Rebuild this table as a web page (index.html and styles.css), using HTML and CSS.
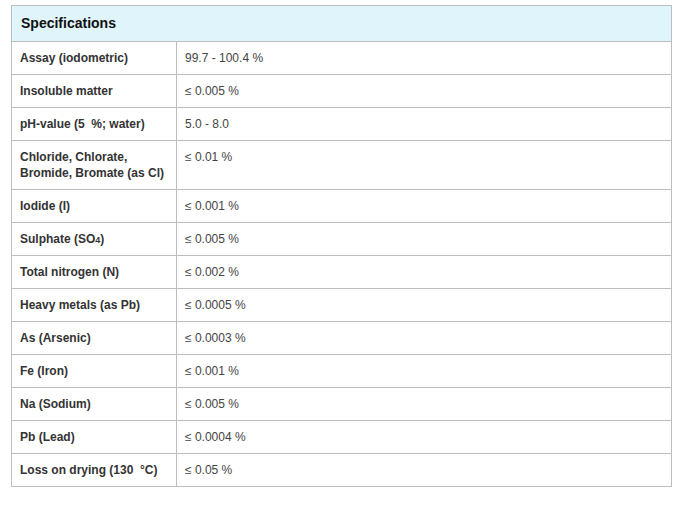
FILE: index.html
```
<!DOCTYPE html>
<html>
<head>
<meta charset="utf-8">
<link rel="stylesheet" href="styles.css">
</head>
<body>
<table class="spec">
  <colgroup>
    <col class="col-k">
    <col class="col-v">
  </colgroup>
  <thead>
    <tr><th colspan="2">Specifications</th></tr>
  </thead>
  <tbody>
    <tr><td class="k">Assay (iodometric)</td><td class="v">99.7 - 100.4 %</td></tr>
    <tr><td class="k">Insoluble matter</td><td class="v">≤ 0.005 %</td></tr>
    <tr><td class="k">pH-value (5 &nbsp;%; water)</td><td class="v">5.0 - 8.0</td></tr>
    <tr><td class="k">Chloride, Chlorate,<br>Bromide, Bromate (as Cl)</td><td class="v">≤ 0.01 %</td></tr>
    <tr><td class="k">Iodide (I)</td><td class="v">≤ 0.001 %</td></tr>
    <tr><td class="k">Sulphate (SO<span class="sub">4</span>)</td><td class="v">≤ 0.005 %</td></tr>
    <tr><td class="k">Total nitrogen (N)</td><td class="v">≤ 0.002 %</td></tr>
    <tr><td class="k">Heavy metals (as Pb)</td><td class="v">≤ 0.0005 %</td></tr>
    <tr><td class="k">As (Arsenic)</td><td class="v">≤ 0.0003 %</td></tr>
    <tr><td class="k">Fe (Iron)</td><td class="v">≤ 0.001 %</td></tr>
    <tr><td class="k">Na (Sodium)</td><td class="v">≤ 0.005 %</td></tr>
    <tr><td class="k">Pb (Lead)</td><td class="v">≤ 0.0004 %</td></tr>
    <tr><td class="k">Loss on drying (130 &nbsp;°C)</td><td class="v">≤ 0.05 %</td></tr>
  </tbody>
</table>
</body>
</html>
```
FILE: styles.css
```
html, body {
  margin: 0;
  padding: 0;
  background: #fff;
}
body {
  padding: 5px 0 0 11px;
  font-family: "Liberation Sans", Arial, sans-serif;
}
.spec {
  border-collapse: collapse;
  width: 661px;
  table-layout: fixed;
}
.col-k {
  width: 165px;
}
.spec th,
.spec td {
  border: 1px solid #bdbdbd;
  text-align: left;
  vertical-align: top;
}
.spec th {
  background: #dff5fb;
  color: #111;
  font-size: 14px;
  font-weight: bold;
  line-height: 17px;
  padding: 9px 8px 9px 9px;
}
.spec td {
  font-size: 12px;
  line-height: 16px;
  padding: 8px 8px 8px 8px;
}
.spec td.k {
  color: #333;
  font-weight: bold;
}
.spec td.v {
  color: #444;
}
.sub {
  font-size: 9px;
  line-height: 0;
}
```
